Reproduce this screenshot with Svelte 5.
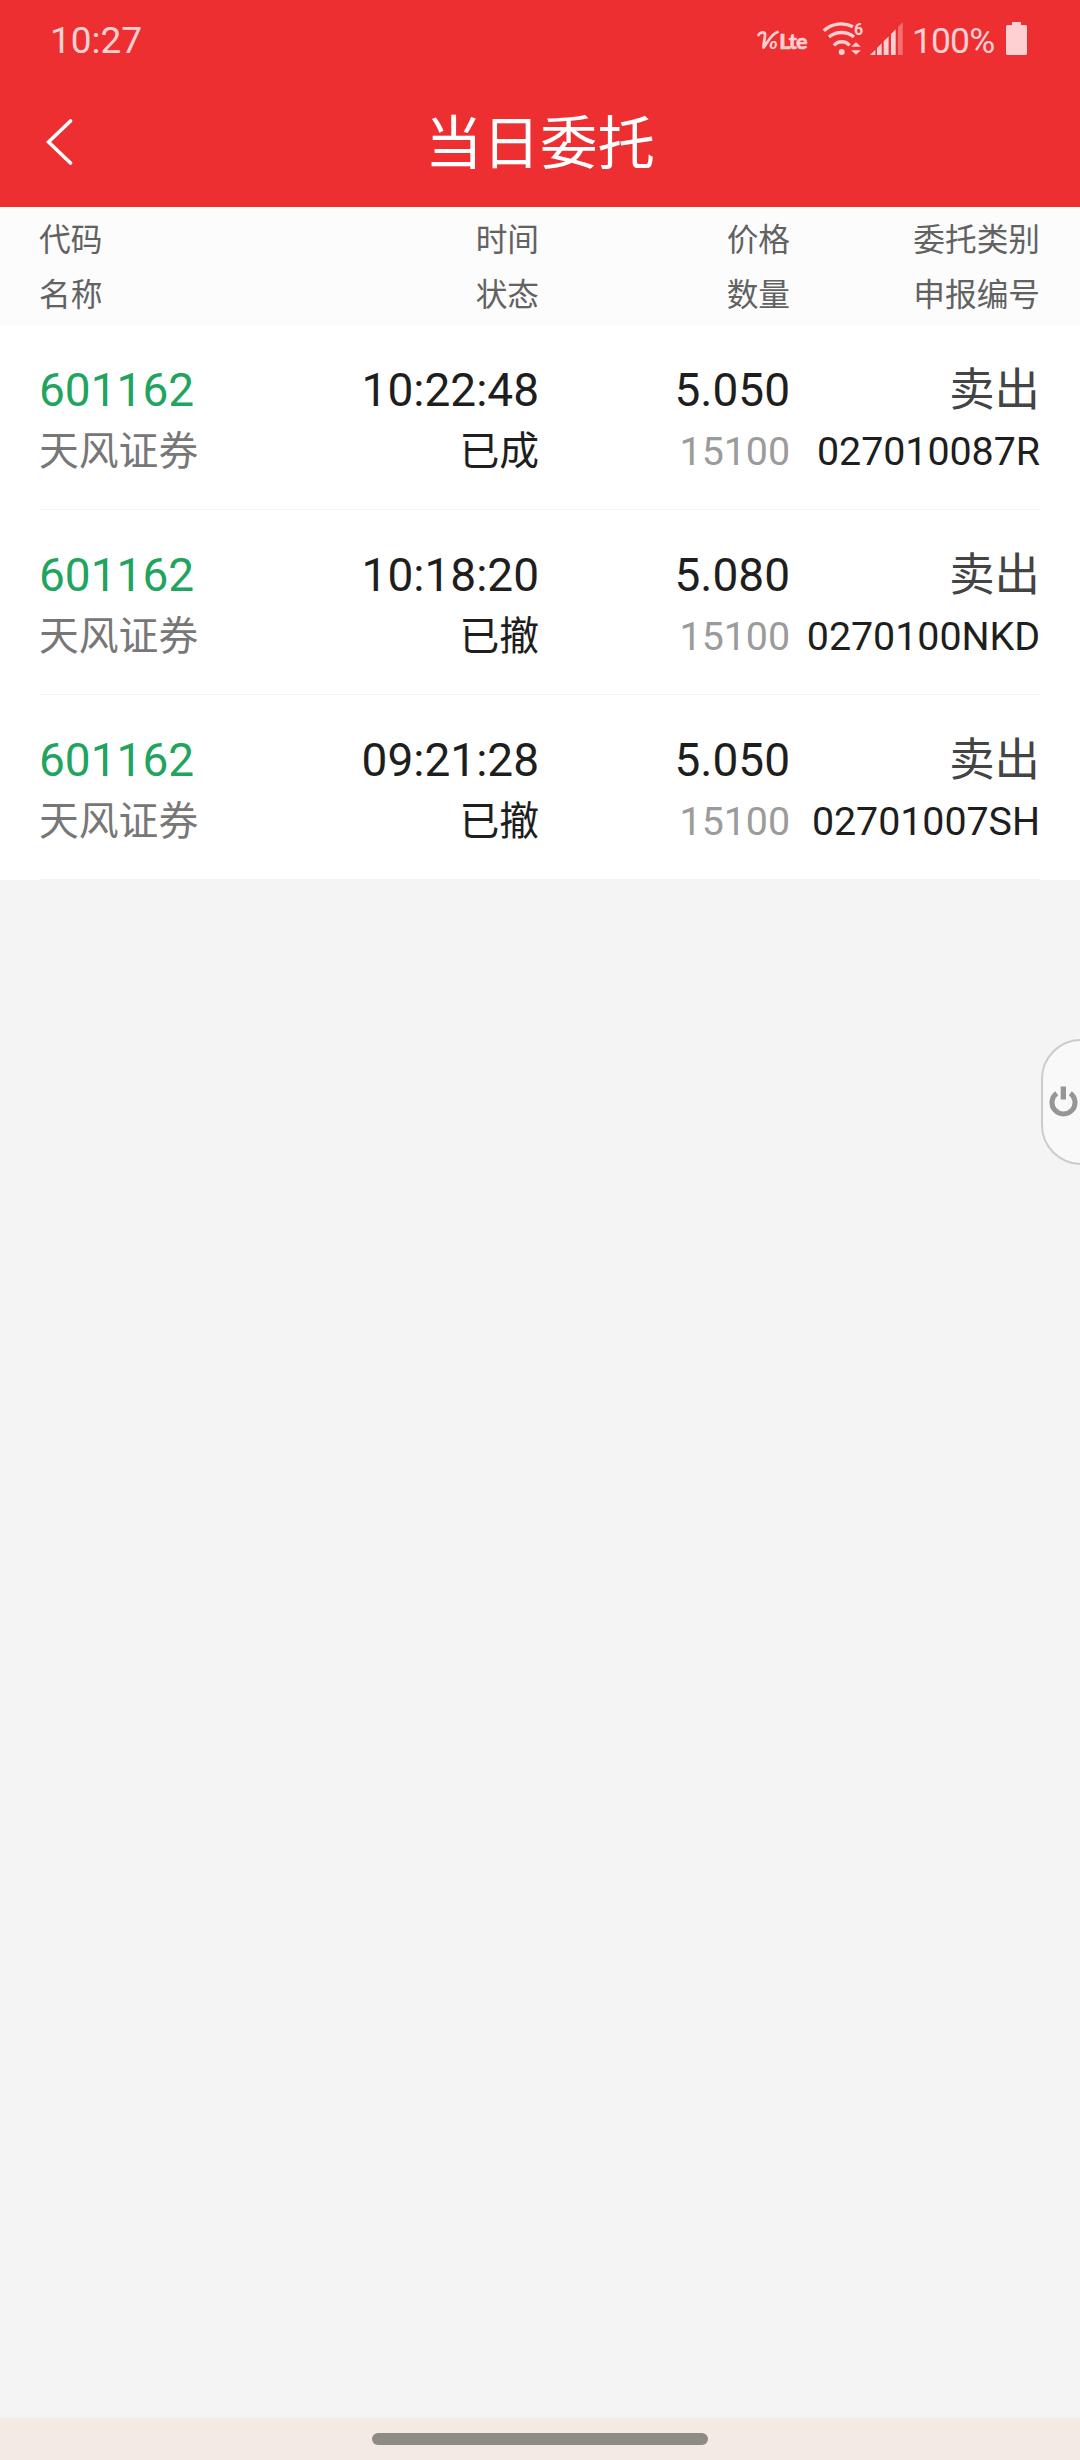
<script>
  const headings = [
    ['代码', '名称'],
    ['时间', '状态'],
    ['价格', '数量'],
    ['委托类别', '申报编号']
  ];

  const orders = [
    { code: '601162', name: '天风证券', time: '10:22:48', status: '已成', price: '5.050', amount: '15100', side: '卖出', id: '027010087R' },
    { code: '601162', name: '天风证券', time: '10:18:20', status: '已撤', price: '5.080', amount: '15100', side: '卖出', id: '0270100NKD' },
    { code: '601162', name: '天风证券', time: '09:21:28', status: '已撤', price: '5.050', amount: '15100', side: '卖出', id: '02701007SH' }
  ];
</script>

<div class="screen">
  <header class="top">
    <div class="statusbar">
      <span class="clock">10:27</span>
      <div class="indicators">
        <svg class="volte" width="58" height="36" viewBox="0 -4 58 36">
          <path d="M1.500 8C3.500 5 7.500 4.500 8 7C8.500 10 6.500 15 6.500 20.500C10 17 13 8 20.500 5" />
          <text class="small-o" x="12.500" y="21.700">o</text>
          <text class="lte" x="22.300" y="21.500">Lte</text>
        </svg>
        <svg class="wifi" width="42" height="36" viewBox="0 0 42 36">
          <path d="M1.800 10.800A25.500 25.500 0 0 1 31 6.800" />
          <path d="M7 17A19.600 19.600 0 0 1 32 17" />
          <path d="M12 25.500A9.900 9.900 0 0 1 27.500 25.500" />
          <circle cx="19.700" cy="32" r="3" />
          <polygon points="29.200,26.700 34,22.200 38.800,26.700" />
          <polygon points="29.200,30.300 38.800,30.300 34,34.800" />
          <text x="32" y="15">6</text>
        </svg>
        <svg class="signal" width="34" height="34" viewBox="0 0 34 34">
          <polygon points="0,33 5.300,27.700 5.300,33" />
          <polygon points="7,33 7,26 11.700,21.300 11.700,33" />
          <polygon points="13.700,33 13.700,19.300 18.600,14.400 18.600,33" />
          <polygon points="21,33 21,12 25.700,7.300 25.700,33" />
          <polygon class="weak" points="28,33 28,5 32.700,0.300 32.700,33" />
        </svg>
        <span class="percent">100%</span>
        <svg class="battery" width="22" height="34" viewBox="0 0 22 34">
          <path d="M6 0H15V3H19.500Q21 3 21 4.500V31.500Q21 33 19.500 33H1.500Q0 33 0 31.500V4.500Q0 3 1.500 3H6Z" />
        </svg>
      </div>
    </div>
    <nav class="navbar">
      <button class="back" aria-label="返回">
        <svg width="28" height="48" viewBox="0 0 28 48">
          <path d="M24.500 2L2.500 23L24.500 44" />
        </svg>
      </button>
      <h1>当日委托</h1>
      <span></span>
    </nav>
  </header>

  <div class="grid headings">
    {#each headings as [upper, lower]}
      <div class="cell"><span>{upper}</span><span>{lower}</span></div>
    {/each}
  </div>

  <main>
    {#each orders as order}
      <div class="order">
        <div class="grid">
          <div class="cell">
            <span class="main code">{order.code}</span>
            <span class="sub name">{order.name}</span>
          </div>
          <div class="cell">
            <span class="main">{order.time}</span>
            <span class="sub status">{order.status}</span>
          </div>
          <div class="cell">
            <span class="main">{order.price}</span>
            <span class="sub amount">{order.amount}</span>
          </div>
          <div class="cell">
            <span class="main side">{order.side}</span>
            <span class="sub">{order.id}</span>
          </div>
        </div>
      </div>
    {/each}
  </main>

  <footer><div class="handle"></div></footer>

  <button class="power" aria-label="退出">
    <svg width="30" height="34" viewBox="0 0 30 34">
      <path d="M7.700 8.200A11.500 11.500 0 1 0 21.300 8.200" />
      <rect x="11.700" y="1.500" width="5.300" height="13" />
    </svg>
  </button>
</div>

<style>
  :global(body) {
    margin: 0;
  }

  .screen {
    position: relative;
    display: flex;
    flex-direction: column;
    width: 1080px;
    height: 2460px;
    overflow: hidden;
    background: #f4f4f4;
    color: #1e1e1e;
    font-family: Roboto, 'Noto Sans CJK SC', sans-serif;
  }

  button {
    padding: 0;
    border: 0;
    background: none;
  }

  svg {
    display: block;
    flex: none;
  }

  .top {
    height: 207px;
    background: #ed2f31;
  }

  .statusbar {
    display: flex;
    justify-content: space-between;
    height: 80px;
    padding: 0 52px 0 50px;
    color: #ffd0d1;
    line-height: 80px;
  }

  .clock {
    padding-top: 1px;
    font-size: 37px;
  }

  .indicators {
    display: flex;
    align-items: flex-start;
    fill: #ffd0d1;
  }

  .volte {
    margin: 23px 7px 0 0;
  }

  .volte path {
    fill: none;
    stroke: #ffd0d1;
    stroke-width: 2.8;
    stroke-linecap: round;
    stroke-linejoin: round;
  }

  .small-o {
    font: italic 900 15px Lato, sans-serif;
  }

  .lte {
    font: 900 21.5px Lato, sans-serif;
    letter-spacing: -0.8px;
    stroke: #ffd0d1;
    stroke-width: 0.5;
  }

  .wifi {
    margin: 20px 6px 0 0;
  }

  .wifi path {
    fill: none;
    stroke: #ffd0d1;
    stroke-width: 3.3;
  }

  .wifi text {
    font: 700 16px Roboto, sans-serif;
  }

  .signal {
    margin: 22px 8px 0 0;
  }

  .weak {
    opacity: 0.4;
  }

  .percent {
    width: 94px;
    padding-top: 1px;
    font-size: 35.5px;
    letter-spacing: -0.9px;
  }

  .battery {
    margin-top: 22px;
  }

  .navbar {
    display: grid;
    grid-template-columns: 1fr auto 1fr;
    align-items: center;
    height: 127px;
    color: #fff;
  }

  .back {
    width: 28px;
    height: 48px;
    margin: 0 0 2px 46px;
  }

  .back path {
    fill: none;
    stroke: #fff;
    stroke-width: 3.6;
    stroke-linecap: round;
  }

  h1 {
    margin: 0;
    padding-top: 2px;
    font-size: 57.5px;
    font-weight: 400;
    line-height: 125px;
  }

  .grid {
    display: grid;
    grid-template-columns: 250px 250px 251px 250px;
    margin-left: -1px;
  }

  .cell {
    display: flex;
    flex-direction: column;
    align-items: flex-end;
    white-space: nowrap;
  }

  .cell:first-child {
    align-items: flex-start;
  }

  .headings {
    box-sizing: border-box;
    height: 118px;
    margin-left: 0;
    padding: 6px 40px 0 39px;
    background: #fcfcfc;
    color: #626262;
    font-size: 31.7px;
    line-height: 55px;
  }

  main {
    background: #fff;
  }

  .order {
    box-sizing: border-box;
    height: 185px;
    margin: 0 40px;
    padding-top: 35px;
    border-bottom: 1px solid #f4f4f4;
    line-height: 61px;
  }

  .main {
    font-size: 46px;
  }

  .sub {
    font-size: 39.4px;
    letter-spacing: -0.05px;
  }

  .name,
  .status {
    font-size: 39.8px;
    letter-spacing: 0;
  }

  .name {
    color: #777;
  }

  .code {
    color: #21a45d;
  }

  .amount {
    color: #9b9b9b;
  }

  .side {
    color: #444;
    font-size: 45.4px;
  }

  footer {
    display: flex;
    align-items: center;
    justify-content: center;
    height: 42px;
    margin-top: auto;
    background: #f3ebe3;
  }

  .handle {
    width: 336px;
    height: 12px;
    border-radius: 6px;
    background: #8e8b84;
  }

  .power {
    position: absolute;
    top: 1039px;
    right: -42px;
    box-sizing: border-box;
    width: 81px;
    height: 126px;
    padding-left: 6px;
    border: 2px solid #ccc;
    border-radius: 40px;
    background: #f9f9f9;
  }

  .power path {
    fill: none;
    stroke: #969696;
    stroke-width: 5;
  }

  .power rect {
    fill: #969696;
  }
</style>
